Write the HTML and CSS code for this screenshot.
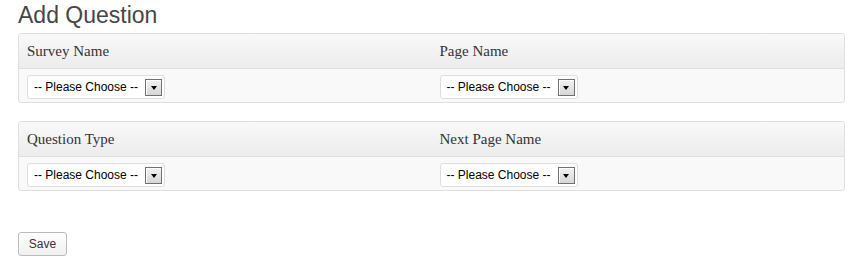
FILE: index.html
```html
<!DOCTYPE html>
<html>
<head>
<meta charset="utf-8">
<title>Add Question</title>
<link rel="stylesheet" href="styles.css">
</head>
<body>
<div class="page">
  <h1 class="title">Add Question</h1>

  <div class="panel">
    <div class="row head">
      <div class="cell">Survey Name</div>
      <div class="cell">Page Name</div>
    </div>
    <div class="row body">
      <div class="cell"><div class="select"><span class="sel-text">-- Please Choose --</span><span class="sel-arrow"><span class="tri"></span></span></div></div>
      <div class="cell"><div class="select"><span class="sel-text">-- Please Choose --</span><span class="sel-arrow"><span class="tri"></span></span></div></div>
    </div>
  </div>

  <div class="panel">
    <div class="row head">
      <div class="cell">Question Type</div>
      <div class="cell">Next Page Name</div>
    </div>
    <div class="row body">
      <div class="cell"><div class="select"><span class="sel-text">-- Please Choose --</span><span class="sel-arrow"><span class="tri"></span></span></div></div>
      <div class="cell"><div class="select"><span class="sel-text">-- Please Choose --</span><span class="sel-arrow"><span class="tri"></span></span></div></div>
    </div>
  </div>

  <div class="actions">
    <button class="btn">Save</button>
  </div>
</div>
</body>
</html>
```

FILE: styles.css
```css
html, body {
  margin: 0;
  padding: 0;
  background: #ffffff;
}
.page {
  padding: 0 12px 0 18px;
  font-family: "Liberation Sans", Arial, sans-serif;
}
.title {
  margin: 0 0 3px;
  font-family: "Liberation Sans", Arial, sans-serif;
  font-weight: normal;
  font-size: 23px;
  line-height: 30px;
  color: #464646;
}
.panel {
  border: 1px solid #dfdfdf;
  border-radius: 3px;
  background: #f9f9f9;
  margin-bottom: 18px;
  overflow: hidden;
}
.row {
  display: grid;
  grid-template-columns: 1fr 1fr;
}
.head {
  height: 34px;
  border-bottom: 1px solid #dfdfdf;
  background: linear-gradient(to bottom, #f9f9f9, #ececec);
}
.head .cell {
  padding: 0 8px;
  font-family: "Liberation Serif", "Times New Roman", serif;
  font-size: 15px;
  line-height: 34px;
  color: #333333;
}
.body {
  height: 33px;
}
.body .cell {
  padding: 6px 8px 0;
}
.select {
  display: inline-flex;
  align-items: flex-start;
  box-sizing: border-box;
  height: 24px;
  width: 138px;
  border: 1px solid #dddddd;
  border-radius: 3px;
  background: #ffffff;
  padding: 3px 2px 0 6px;
}
.sel-text {
  flex: 1;
  font-family: "Liberation Sans", Arial, sans-serif;
  font-size: 12px;
  line-height: 17px;
  color: #000000;
  white-space: nowrap;
}
.sel-arrow {
  box-sizing: border-box;
  width: 17px;
  height: 17px;
  border: 1px solid #707070;
  background: linear-gradient(to bottom, #f2f2f2, #d6d6d6);
  box-shadow: inset 1px 1px 0 #ffffff;
  display: flex;
  align-items: center;
  justify-content: center;
}
.tri {
  width: 0;
  height: 0;
  border-left: 3.5px solid transparent;
  border-right: 3.5px solid transparent;
  border-top: 4px solid #000000;
  margin-top: 1px;
}
.actions {
  padding-top: 23px;
}
.btn {
  box-sizing: border-box;
  width: 49px;
  height: 24px;
  border: 1px solid #bbbbbb;
  border-radius: 3px;
  background: linear-gradient(to bottom, #ffffff, #f0f0f0);
  font-family: "Liberation Sans", Arial, sans-serif;
  font-size: 12px;
  color: #333333;
  padding: 0;
  margin: 0;
}
```
